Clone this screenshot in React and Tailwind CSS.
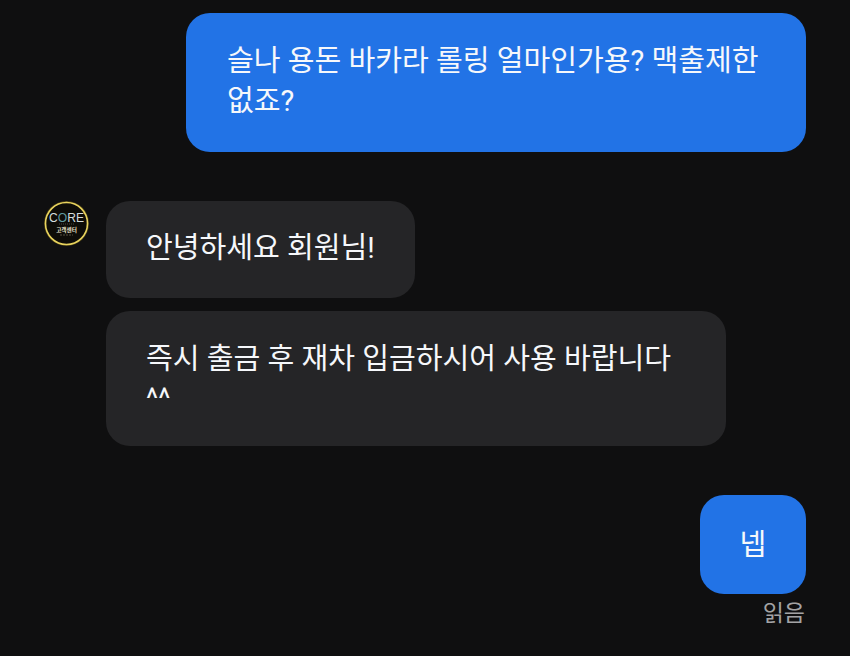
export default function App() {
  const font = { fontFamily: '"Roboto","Noto Sans CJK KR",sans-serif' };
  return (
    <div style={font} className="w-[850px] h-[656px] overflow-hidden bg-[#0f0f10] pt-[13px] pl-[44px] pr-[44px] flex flex-col text-[#f6f8fb] text-[29.1px] leading-[40px]">
      <div className="self-end w-[620px] h-[139px] rounded-[24px] bg-[#2273e6] pt-[28px] pl-[41px] pr-[40px]">
        슬나 용돈 바카라 롤링 얼마인가용? 맥출제한 없죠?
      </div>
      <div className="mt-[49px] flex gap-[17px]">
        <div className="w-[45px] shrink-0">
          <svg width="45" height="45" viewBox="0 0 45 45">
            <circle cx="22.5" cy="22.5" r="22.5" fill="#4a4016" />
            <circle cx="22.5" cy="22.5" r="21" fill="#0d0c08" stroke="#e8d35e" strokeWidth="1.6" />
            <text x="22.5" y="20.5" textAnchor="middle" fontSize="12" textLength="35" lengthAdjust="spacingAndGlyphs" fill="#d4dcdc" fontFamily="Liberation Sans">
              C<tspan fill="#5f9aa0">O</tspan>RE
            </text>
            <line x1="15" y1="23" x2="30" y2="23" stroke="#66655a" strokeWidth="0.7" strokeDasharray="1 1" />
            <text x="22.5" y="30.5" textAnchor="middle" fontSize="5.6" fontWeight="700" fill="#ece6cf" fontFamily="Noto Sans CJK KR">고객센터</text>
            <line x1="16" y1="34" x2="29" y2="34" stroke="#77705a" strokeWidth="0.7" strokeDasharray="2 1" />
          </svg>
        </div>
        <div className="flex flex-col gap-[13px] items-start">
          <div className="h-[97px] w-[309px] rounded-[24px] bg-[#252527] pt-[27px] pl-[40px]">안녕하세요 회원님!</div>
          <div className="h-[135px] w-[620px] rounded-[24px] bg-[#252527] pt-[28px] pl-[40px] pr-[40px]">즉시 출금 후 재차 입금하시어 사용 바랍니다 ^^</div>
        </div>
      </div>
      <div className="mt-[49px] self-end flex flex-col items-end">
        <div className="w-[106px] h-[99px] rounded-[24px] bg-[#2273e6] flex items-center justify-center">넵</div>
        <div className="mt-[4px] text-[23px] leading-[32px] text-[#a3a3a5] pr-[1px]">읽음</div>
      </div>
    </div>
  );
}
